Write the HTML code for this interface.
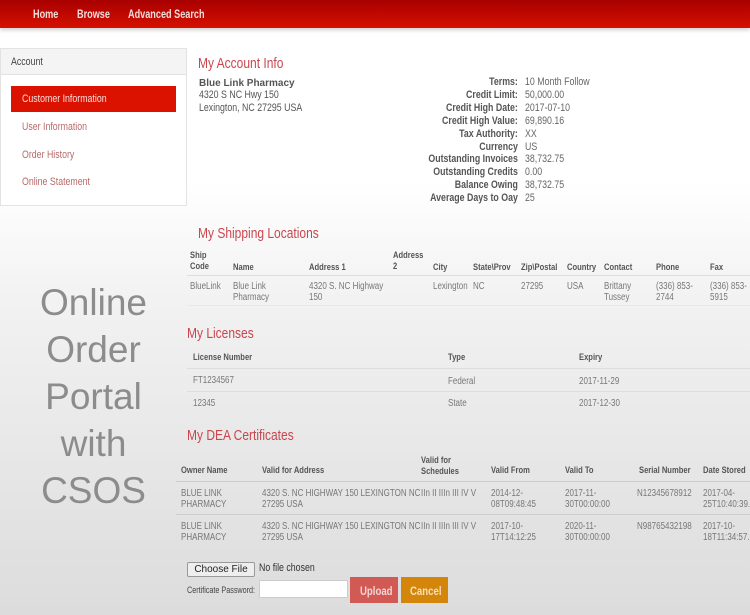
<!DOCTYPE html>
<html><head><style>
*{margin:0;padding:0;box-sizing:border-box}
body{width:750px;height:615px;overflow:hidden;position:relative;font-family:"Liberation Sans",sans-serif;background:linear-gradient(#fff 0,#fff 180px,#f2f2f2 300px,#dcdcdc 615px);color:#555}
.a{position:absolute;white-space:nowrap}
.t{transform:scaleX(.8);transform-origin:0 0}
.nav{position:absolute;left:0;top:0;width:750px;height:28px;background:linear-gradient(#a80000,#d51000);box-shadow:0 2px 4px rgba(0,0,0,.2)}
.nav span{position:absolute;top:7px;color:#f3dede;font-weight:bold;font-size:12px;transform:scaleX(.76);transform-origin:0 0;white-space:nowrap}
.h{color:#c9464e;font-size:15px}
.th{font-weight:bold;font-size:9.5px;color:#555}
.td{font-size:10px;color:#777}
.r{text-align:right;transform-origin:100% 0}
.line{position:absolute;height:1px;background:#ddd}
</style></head><body>
<div class="nav"><span style="left:33px">Home</span><span style="left:77px">Browse</span><span style="left:128px">Advanced Search</span></div>

<div class="a" style="left:0;top:48px;width:187px;height:158px;background:#fff;border:1px solid #e3e3e3"></div>
<div class="a" style="left:1px;top:49px;width:185px;height:26px;background:#f4f4f4;border-bottom:1px solid #e3e3e3"></div>
<div class="a t" style="left:11px;top:56px;font-size:11px;color:#444">Account</div>
<div class="a" style="left:11px;top:86px;width:165px;height:26px;background:#dc1200"></div>
<div class="a t" style="left:22px;top:93px;font-size:11px;color:#f6e0e0">Customer Information</div>
<div class="a t" style="left:22px;top:121px;font-size:11px;color:#b86a6a">User Information</div>
<div class="a t" style="left:22px;top:149px;font-size:11px;color:#b86a6a">Order History</div>
<div class="a t" style="left:22px;top:176px;font-size:11px;color:#b86a6a">Online Statement</div>

<div class="a t h" style="left:198px;top:55px">My Account Info</div>
<div class="a" style="left:199px;top:78px;font-weight:bold;font-size:10px;color:#555">Blue Link Pharmacy</div>
<div class="a t" style="left:199px;top:89px;font-size:11px;color:#555;line-height:13px">4320 S NC Hwy 150<br>Lexington, NC 27295 USA</div>
<div class="a t r" style="right:232px;top:76px;font-size:11px;font-weight:bold;color:#555;line-height:12.9px">Terms:<br>Credit Limit:<br>Credit High Date:<br>Credit High Value:<br>Tax Authority:<br>Currency<br>Outstanding Invoices<br>Outstanding Credits<br>Balance Owing<br>Average Days to Oay</div>
<div class="a t" style="left:525px;top:76px;font-size:11px;color:#666;line-height:12.9px">10 Month Follow<br>50,000.00<br>2017-07-10<br>69,890.16<br>XX<br>US<br>38,732.75<br>0.00<br>38,732.75<br>25</div>

<div class="a t h" style="left:198px;top:225px">My Shipping Locations</div>
<div class="a t th" style="left:190px;top:250px;line-height:11px">Ship<br>Code</div>
<div class="a t th" style="left:233px;top:262px">Name</div>
<div class="a t th" style="left:309px;top:262px">Address 1</div>
<div class="a t th" style="left:393px;top:250px;line-height:11px">Address<br>2</div>
<div class="a t th" style="left:433px;top:262px">City</div>
<div class="a t th" style="left:473px;top:262px">State\Prov</div>
<div class="a t th" style="left:521px;top:262px">Zip\Postal</div>
<div class="a t th" style="left:567px;top:262px">Country</div>
<div class="a t th" style="left:604px;top:262px">Contact</div>
<div class="a t th" style="left:656px;top:262px">Phone</div>
<div class="a t th" style="left:710px;top:262px">Fax</div>
<div class="line" style="left:187px;top:275px;width:563px"></div>
<div class="a t td" style="left:190px;top:281px;line-height:11px">BlueLink</div>
<div class="a t td" style="left:233px;top:281px;line-height:11px">Blue Link<br>Pharmacy</div>
<div class="a t td" style="left:309px;top:281px;line-height:11px">4320 S. NC Highway<br>150</div>
<div class="a t td" style="left:433px;top:281px">Lexington</div>
<div class="a t td" style="left:473px;top:281px">NC</div>
<div class="a t td" style="left:521px;top:281px">27295</div>
<div class="a t td" style="left:567px;top:281px">USA</div>
<div class="a t td" style="left:604px;top:281px;line-height:11px">Brittany<br>Tussey</div>
<div class="a t td" style="left:656px;top:281px;line-height:11px">(336) 853-<br>2744</div>
<div class="a t td" style="left:710px;top:281px;line-height:11px">(336) 853-<br>5915</div>
<div class="line" style="left:187px;top:305px;width:563px;background:#e8e8e8"></div>

<div class="a t h" style="left:187px;top:325px">My Licenses</div>
<div class="a t th" style="left:193px;top:352px">License Number</div>
<div class="a t th" style="left:448px;top:352px">Type</div>
<div class="a t th" style="left:579px;top:352px">Expiry</div>
<div class="line" style="left:187px;top:368px;width:563px"></div>
<div class="a t td" style="left:193px;top:375px">FT1234567</div>
<div class="a t td" style="left:448px;top:376px">Federal</div>
<div class="a t td" style="left:579px;top:376px">2017-11-29</div>
<div class="line" style="left:187px;top:391px;width:563px"></div>
<div class="a t td" style="left:193px;top:398px">12345</div>
<div class="a t td" style="left:448px;top:398px">State</div>
<div class="a t td" style="left:579px;top:398px">2017-12-30</div>

<div class="a t h" style="left:187px;top:427px">My DEA Certificates</div>
<div class="a t th" style="left:181px;top:465px">Owner Name</div>
<div class="a t th" style="left:262px;top:465px">Valid for Address</div>
<div class="a t th" style="left:421px;top:455px;line-height:11px">Valid for<br>Schedules</div>
<div class="a t th" style="left:491px;top:465px">Valid From</div>
<div class="a t th" style="left:565px;top:465px">Valid To</div>
<div class="a t th" style="left:639px;top:465px">Serial Number</div>
<div class="a t th" style="left:703px;top:465px">Date Stored</div>
<div class="line" style="left:176px;top:481px;width:574px;background:#ccc"></div>
<div class="a t td" style="left:181px;top:488px;line-height:11px">BLUE LINK<br>PHARMACY</div>
<div class="a t td" style="left:262px;top:488px;line-height:11px">4320 S. NC HIGHWAY 150 LEXINGTON NC<br>27295 USA</div>
<div class="a t td" style="left:421px;top:488px">IIn II IIIn III IV V</div>
<div class="a t td" style="left:491px;top:488px;line-height:11px">2014-12-<br>08T09:48:45</div>
<div class="a t td" style="left:565px;top:488px;line-height:11px">2017-11-<br>30T00:00:00</div>
<div class="a t td" style="left:637px;top:488px">N12345678912</div>
<div class="a t td" style="left:703px;top:488px;line-height:11px">2017-04-<br>25T10:40:39.1</div>
<div class="line" style="left:176px;top:514px;width:574px;background:#ccc"></div>
<div class="a t td" style="left:181px;top:521px;line-height:11px">BLUE LINK<br>PHARMACY</div>
<div class="a t td" style="left:262px;top:521px;line-height:11px">4320 S. NC HIGHWAY 150 LEXINGTON NC<br>27295 USA</div>
<div class="a t td" style="left:421px;top:521px">IIn II IIIn III IV V</div>
<div class="a t td" style="left:491px;top:521px;line-height:11px">2017-10-<br>17T14:12:25</div>
<div class="a t td" style="left:565px;top:521px;line-height:11px">2020-11-<br>30T00:00:00</div>
<div class="a t td" style="left:637px;top:521px">N98765432198</div>
<div class="a t td" style="left:703px;top:521px;line-height:11px">2017-10-<br>18T11:34:57.6</div>

<div class="a" style="left:187px;top:562px;width:68px;height:15px;border:1px solid #999;border-radius:2px;background:#eee;font-size:10px;color:#222;text-align:center;line-height:13px">Choose File</div>
<div class="a t" style="left:259px;top:562px;font-size:11px;color:#333">No file chosen</div>
<div class="a t" style="left:187px;top:585px;font-size:9px;color:#444">Certificate Password:</div>
<div class="a" style="left:259px;top:580px;width:89px;height:18px;background:#fff;border:1px solid #ccc"></div>
<div class="a" style="left:350px;top:577px;width:48px;height:26px;background:#d15a55"></div>
<div class="a t" style="left:360px;top:584px;color:#f5d5d5;font-weight:bold;font-size:12px">Upload</div>
<div class="a" style="left:401px;top:577px;width:47px;height:26px;background:#d4860a"></div>
<div class="a t" style="left:410px;top:584px;color:#f6e0b8;font-weight:bold;font-size:12px">Cancel</div>

<div class="a" style="left:0;top:279px;width:187px;text-align:center;font-size:37px;line-height:47px;color:#8c8c8c">Online<br>Order<br>Portal<br>with<br>CSOS</div>
</body></html>
